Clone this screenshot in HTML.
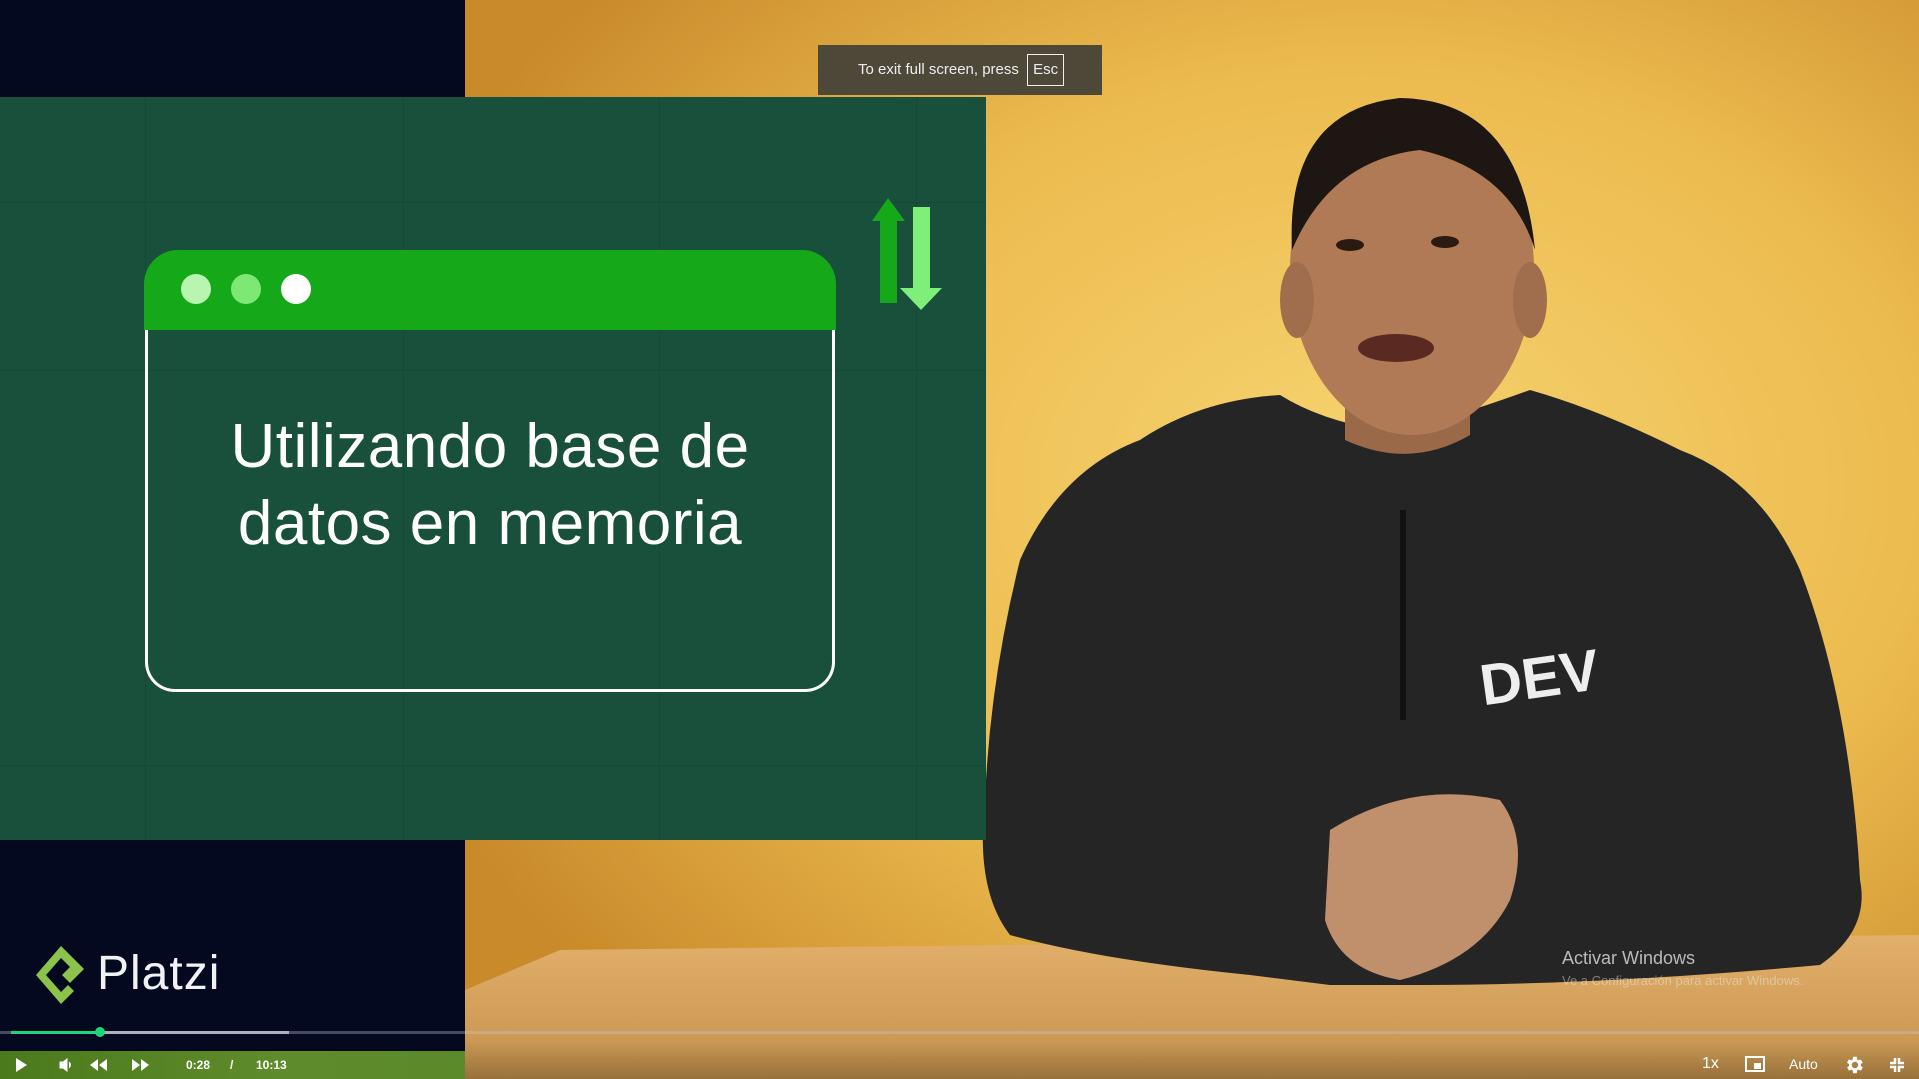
<!DOCTYPE html>
<html><head><meta charset="utf-8"><style>
*{margin:0;padding:0;box-sizing:border-box}
body{width:1919px;height:1079px;overflow:hidden;position:relative;font-family:"Liberation Sans",sans-serif;background:#e2a840}
.abs{position:absolute}
</style></head><body>
<svg class="abs" style="left:0;top:0" width="1919" height="1079">
<defs>
<radialGradient id="bg" cx="0.62" cy="0.45" r="0.7">
<stop offset="0" stop-color="#f6d470"/><stop offset="0.55" stop-color="#ecbb4f"/><stop offset="1" stop-color="#c98a2a"/></radialGradient>
<linearGradient id="tb" x1="0" y1="0" x2="0" y2="1"><stop offset="0" stop-color="#e2b06a"/><stop offset="1" stop-color="#c4924e"/></linearGradient>
</defs>
<rect x="465" y="0" width="1454" height="1079" fill="url(#bg)"/>
<path d="M465 990 L560 950 L1919 935 L1919 1079 L465 1079Z" fill="url(#tb)"/>
<path d="M1280 395 Q1200 400 1140 440 Q1060 470 1020 560 Q990 680 985 800 Q975 890 1010 935 Q1100 960 1250 975 L1330 985 L1420 985 Q1600 985 1820 965 Q1870 930 1860 880 Q1850 700 1800 570 Q1760 480 1680 450 Q1600 410 1530 390 Q1420 430 1380 430 Q1320 420 1280 395Z" fill="#252525"/>
<path d="M1345 380 L1345 440 Q1410 470 1470 435 L1470 370Z" fill="#9a6a48"/>
<rect x="1400" y="510" width="6" height="210" fill="#111"/>
<ellipse cx="1412" cy="270" rx="122" ry="165" fill="#b07a56"/>
<path d="M1292 250 Q1285 110 1400 98 Q1520 100 1535 250 Q1510 170 1420 150 Q1330 160 1292 250Z" fill="#1e1612"/>
<ellipse cx="1297" cy="300" rx="17" ry="38" fill="#a06e4c"/>
<ellipse cx="1530" cy="300" rx="17" ry="38" fill="#a06e4c"/>
<ellipse cx="1350" cy="245" rx="14" ry="6" fill="#2a1a12"/>
<ellipse cx="1445" cy="242" rx="14" ry="6" fill="#2a1a12"/>
<ellipse cx="1396" cy="348" rx="38" ry="14" fill="#5a2a22"/>
<path d="M1330 830 Q1410 780 1500 800 Q1530 840 1510 900 Q1480 960 1400 980 Q1340 970 1325 920Z" fill="#c08f6c"/>
<text x="1480" y="700" font-family="Liberation Sans" font-weight="bold" font-size="58" fill="#eee" transform="rotate(-8 1520 680)">DEV</text>
</svg>
<div class="abs" style="left:0;top:0;width:465px;height:1051px;background:#040920"></div>
<div class="abs" style="left:0;top:97px;width:986px;height:743px;background:#18503c">
 <div class="abs" style="left:145px;top:0;width:1px;height:743px;background:#14493a"></div>
 <div class="abs" style="left:403px;top:0;width:1px;height:743px;background:#14493a"></div>
 <div class="abs" style="left:659px;top:0;width:1px;height:743px;background:#14493a"></div>
 <div class="abs" style="left:916px;top:0;width:1px;height:743px;background:#14493a"></div>
 <div class="abs" style="left:0;top:105px;width:986px;height:1px;background:#14493a"></div>
 <div class="abs" style="left:0;top:273px;width:986px;height:1px;background:#14493a"></div>
 <div class="abs" style="left:0;top:668px;width:986px;height:1px;background:#14493a"></div>
</div>
<div class="abs" style="left:145px;top:320px;width:690px;height:372px;border:3px solid #fff;border-top:none;border-radius:0 0 30px 30px"></div>
<div class="abs" style="left:144px;top:250px;width:692px;height:80px;background:#15a919;border-radius:34px 34px 0 0"></div>
<div class="abs" style="left:181px;top:274px;width:30px;height:30px;border-radius:50%;background:#b8f5b0"></div>
<div class="abs" style="left:231px;top:274px;width:30px;height:30px;border-radius:50%;background:#7ee875"></div>
<div class="abs" style="left:281px;top:274px;width:30px;height:30px;border-radius:50%;background:#fff"></div>
<div class="abs" style="left:145px;top:408px;width:690px;text-align:center;color:#fff;font-size:62px;line-height:77px;letter-spacing:0.5px">Utilizando base de<br>datos en memoria</div>
<svg class="abs" style="left:860px;top:195px" width="90" height="120">
<path d="M12 26 L28 3 L45 26 L37 26 L37 108 L20 108 L20 26Z" fill="#15a919"/>
<path d="M53 12 L70 12 L70 93 L82 93 L61 115 L40 93 L53 93Z" fill="#7ef079"/>
</svg>
<div class="abs" style="left:818px;top:45px;width:284px;height:50px;background:#4e4838;color:#eee;font-size:15px;line-height:50px;padding-left:40px">To exit full screen, press <span style="display:inline-block;border:1px solid #eee;padding:0 5px;line-height:30px;margin-left:4px">Esc</span></div>
<svg class="abs" style="left:32px;top:942px" width="58" height="66">
<path d="M29 4 L52 27 L38 41 L30 33 L38 25 L29 16 L14 33 L29 50 L36 43 L42 49 L29 62 L4 33Z" fill="#8cc34a"/>
</svg>
<div class="abs" style="left:97px;top:946px;color:#f2f2f4;font-size:48px;letter-spacing:1px">Platzi</div>
<div class="abs" style="left:1562px;top:948px;color:rgba(235,235,235,.75);font-size:18px">Activar Windows</div>
<div class="abs" style="left:1562px;top:973px;color:rgba(235,235,235,.45);font-size:13px">Ve a Configuración para activar Windows.</div>
<div class="abs" style="left:0;top:1031px;width:1919px;height:3px;background:rgba(200,200,210,.35)"></div>
<div class="abs" style="left:11px;top:1031px;width:278px;height:3px;background:#b0b0b8"></div>
<div class="abs" style="left:11px;top:1031px;width:89px;height:3px;background:#1ed67a"></div>
<div class="abs" style="left:95px;top:1027px;width:10px;height:10px;border-radius:50%;background:#1ed67a"></div>
<div class="abs" style="left:0;top:1051px;width:465px;height:28px;background:linear-gradient(90deg,#4a7a1c,#5f8c2a 60%,#5b8a2a)"></div>
<div class="abs" style="left:465px;top:1040px;width:1454px;height:39px;background:linear-gradient(rgba(60,40,20,0),rgba(70,50,20,.35))"></div>
<div class="abs" style="left:0;top:1051px;width:1919px;height:28px;color:#fff;font-size:12px;font-weight:bold">
 <svg class="abs" style="left:15px;top:6px" width="14" height="16"><path d="M1 1 L12 8 L1 15Z" fill="#fff"/></svg>
 <svg class="abs" style="left:59px;top:7px" width="14" height="14"><path d="M1 4 H4 L8 1 V13 L4 10 H1Z M10 4 Q13 7 10 10" fill="#fff" stroke="#fff" stroke-width="1"/></svg>
 <svg class="abs" style="left:88px;top:7px" width="20" height="14"><path d="M10 1 L2 7 L10 13Z M19 1 L11 7 L19 13Z" fill="#fff"/></svg>
 <svg class="abs" style="left:131px;top:7px" width="20" height="14"><path d="M1 1 L9 7 L1 13Z M10 1 L18 7 L10 13Z" fill="#fff"/></svg>
 <span class="abs" style="left:186px;top:7px">0:28</span>
 <span class="abs" style="left:230px;top:7px">/</span>
 <span class="abs" style="left:256px;top:7px">10:13</span>
 <span class="abs" style="left:1702px;top:4px;font-size:16px;font-weight:normal">1x</span>
 <svg class="abs" style="left:1745px;top:5px" width="20" height="17"><rect x="1" y="1" width="18" height="14" fill="none" stroke="#fff" stroke-width="2"/><rect x="9" y="7" width="7" height="6" fill="#fff"/></svg>
 <span class="abs" style="left:1789px;top:5px;font-size:14px;font-weight:normal">Auto</span>
 <svg class="abs" style="left:1843px;top:3px" width="22" height="22" viewBox="0 0 24 24"><path fill="#fff" d="M19.4 13a7.5 7.5 0 000-2l2.1-1.6-2-3.5-2.5 1a7 7 0 00-1.7-1L15 3h-4l-.4 2.9a7 7 0 00-1.7 1l-2.5-1-2 3.5L6.6 11a7.5 7.5 0 000 2l-2.1 1.6 2 3.5 2.5-1a7 7 0 001.7 1L11 21h4l.4-2.9a7 7 0 001.7-1l2.5 1 2-3.5zM13 15.5A3.5 3.5 0 1113 8.5a3.5 3.5 0 010 7z"/></svg>
 <svg class="abs" style="left:1890px;top:7px" width="14" height="14"><path d="M5 0V5H0M9 0V5H14M5 14V9H0M9 14V9H14" fill="none" stroke="#fff" stroke-width="2.5"/></svg>
</div>
</body></html>
